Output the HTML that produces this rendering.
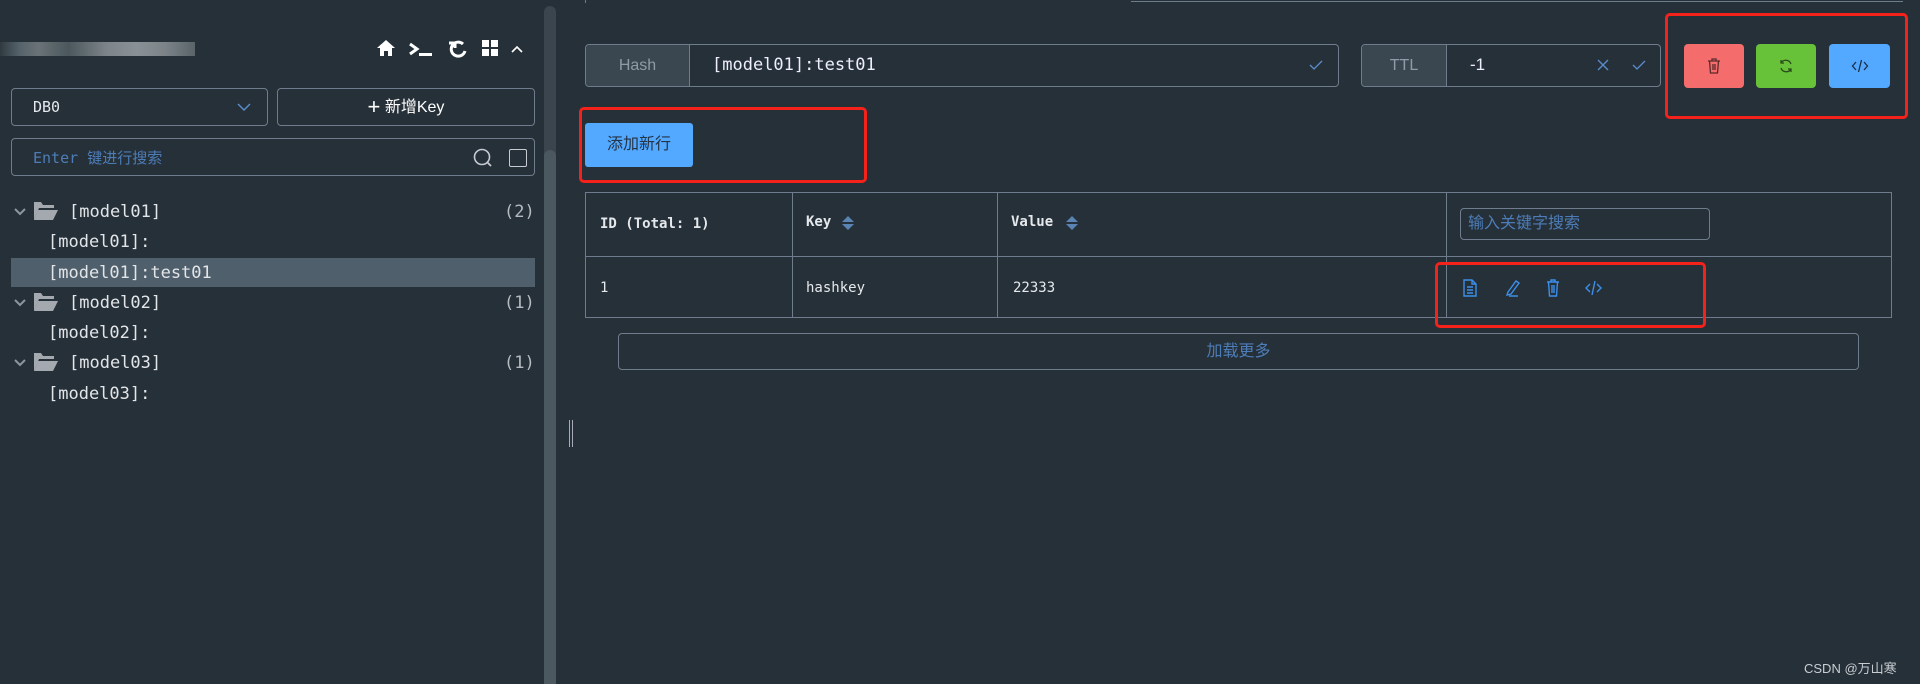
<!DOCTYPE html>
<html><head><meta charset="utf-8"><style>
*{box-sizing:border-box;margin:0;padding:0}
body{width:1920px;height:684px;background:#263038;position:relative;overflow:hidden;font-family:"Liberation Sans","Noto Sans CJK SC",sans-serif;color:#e6e9ec}
.a{position:absolute}
.mono{font-family:"DejaVu Sans Mono","Liberation Mono","Noto Sans CJK SC",monospace}
.bd{border:1px solid #6e7c8d;border-radius:4px}
.tree{font-size:17px;color:#e3e6e9;line-height:20px}
.red{border:3px solid #f5221b;border-radius:5px}
</style></head><body>
<div class="a" style="left:0;top:42px;width:195px;height:14px;background:linear-gradient(90deg,#2f3a40 0,#56626a 10%,#6a7377 20%,#4a575c 35%,#7e858a 55%,#8a9196 70%,#7b8388 85%,#5a6468 100%)"></div>
<svg class="a" style="left:375px;top:38px" width="152" height="20" viewBox="0 0 152 20">
<path d="M2 10 L11 2 L20 10 L17 10 L17 18 L13 18 L13 13 L9 13 L9 18 L5 18 L5 10 Z" fill="#fff"/>
<path d="M35 6 L42 11 L35 16" stroke="#fff" stroke-width="3" fill="none"/><rect x="44" y="15" width="13" height="3" fill="#fff"/>
<path d="M88 6 A7 7 0 1 0 90 13" stroke="#fff" stroke-width="3" fill="none"/><path d="M74 5 L80 5 L80 10" stroke="#fff" stroke-width="3" fill="none"/>
<rect x="107" y="2" width="7" height="7" fill="#fff"/><rect x="116" y="2" width="7" height="7" fill="#fff"/><rect x="107" y="11" width="7" height="7" fill="#fff"/><rect x="116" y="11" width="7" height="7" fill="#fff"/>
<path d="M137 14 L142 9 L147 14" stroke="#fff" stroke-width="1.6" fill="none"/>
</svg>
<div class="a bd" style="left:11px;top:88px;width:257px;height:38px"></div>
<div class="a mono" style="left:33px;top:98px;font-size:15px" >DB0</div>
<svg class="a" style="left:236px;top:101px" width="16" height="12"><path d="M2 3 L8 9 L14 3" stroke="#5b8ccc" stroke-width="1.5" fill="none"/></svg>
<div class="a bd" style="left:277px;top:88px;width:258px;height:38px;text-align:center;line-height:36px;font-size:16px;color:#fff"><span style="font-size:22px;font-weight:300;vertical-align:-2px">+</span> 新增Key</div>
<div class="a bd" style="left:11px;top:138px;width:524px;height:38px"></div>
<div class="a mono" style="left:33px;top:147px;font-size:15px;color:#4d7db8">Enter <span style="font-family:'Noto Sans CJK SC',sans-serif">键进行搜索</span></div>
<svg class="a" style="left:472px;top:147px" width="22" height="22"><circle cx="10" cy="10" r="7.5" stroke="#c5cbd1" stroke-width="1.6" fill="none"/><path d="M15 15 L19 19" stroke="#c5cbd1" stroke-width="1.8"/></svg>
<div class="a" style="left:509px;top:149px;width:18px;height:18px;border:1px solid #c5cbd1;border-radius:2px"></div>
<div class="a" style="left:11px;top:258px;width:524px;height:29px;background:#4f5f6b"></div>
<svg class="a" style="left:12px;top:200px" width="50" height="210">
<g id="f"><path d="M3 9 L8 14 L13 9" stroke="#8d969d" stroke-width="2" fill="none"/><path d="M22 2 L29 2 L31 5 L42 5 L42 8 L27 8 L22 20 Z" fill="#a3a9ae"/><path d="M26 10 L46 10 L41 20 L22 20 Z" fill="#a3a9ae"/></g>
<use href="#f" y="91"/><use href="#f" y="151"/>
</svg>
<div class="a tree mono" style="left:69px;top:202px">[model01]</div>
<div class="a tree mono" style="left:504px;top:202px;color:#b5bbc0">(2)</div>
<div class="a tree mono" style="left:48px;top:232px">[model01]:</div>
<div class="a tree mono" style="left:48px;top:263px">[model01]:test01</div>
<div class="a tree mono" style="left:69px;top:293px">[model02]</div>
<div class="a tree mono" style="left:504px;top:293px;color:#b5bbc0">(1)</div>
<div class="a tree mono" style="left:48px;top:323px">[model02]:</div>
<div class="a tree mono" style="left:69px;top:353px">[model03]</div>
<div class="a tree mono" style="left:504px;top:353px;color:#b5bbc0">(1)</div>
<div class="a tree mono" style="left:48px;top:384px">[model03]:</div>
<div class="a" style="left:544px;top:6px;width:12px;height:678px;background:#3a454d;border-radius:6px 6px 0 0"></div>
<div class="a" style="left:544px;top:150px;width:12px;height:534px;background:#4c5860;border-radius:6px 6px 0 0"></div>
<div class="a" style="left:569px;top:420px;width:1px;height:27px;background:#aab"></div>
<div class="a" style="left:572px;top:420px;width:1px;height:27px;background:#aab"></div>
<div class="a" style="left:585px;top:0;width:1px;height:3px;background:#6e7c8d"></div>
<div class="a" style="left:1131px;top:1px;width:772px;height:1px;background:#6e7c8d"></div>
<div class="a bd" style="left:585px;top:44px;width:754px;height:43px;overflow:hidden">
<div style="position:absolute;left:0;top:0;width:104px;height:41px;background:#3a4750;border-right:1px solid #6e7c8d;color:#8f9ba6;font-size:16px;text-align:center;line-height:41px">Hash</div></div>
<div class="a mono" style="left:712px;top:55px;font-size:17px;color:#eef">[model01]:test01</div>
<svg class="a" style="left:1308px;top:58px" width="16" height="14"><path d="M2 7 L6 11 L14 3" stroke="#5b8ccc" stroke-width="1.3" fill="none"/></svg>
<div class="a bd" style="left:1361px;top:44px;width:300px;height:43px;overflow:hidden">
<div style="position:absolute;left:0;top:0;width:85px;height:41px;background:#3a4750;border-right:1px solid #6e7c8d;color:#8f9ba6;font-size:16px;text-align:center;line-height:41px">TTL</div></div>
<div class="a" style="left:1470px;top:55px;font-size:17px;color:#eef">-1</div>
<svg class="a" style="left:1596px;top:58px" width="60" height="14"><path d="M2 2 L12 12 M12 2 L2 12" stroke="#5b8ccc" stroke-width="1.3"/><path d="M37 7 L41 11 L49 3" stroke="#5b8ccc" stroke-width="1.3" fill="none"/></svg>
<div class="a" style="left:1684px;top:44px;width:60px;height:44px;background:#f56c6c;border-radius:4px"></div>
<div class="a" style="left:1756px;top:44px;width:60px;height:44px;background:#67c23a;border-radius:4px"></div>
<div class="a" style="left:1829px;top:44px;width:61px;height:44px;background:#53a8ff;border-radius:4px"></div>
<svg class="a" style="left:1706px;top:57px" width="16" height="18"><path d="M2 4 H14 M6 4 V2 H10 V4 M3.5 4 L4.5 16 H11.5 L12.5 4 M7 7 V13 M9 7 V13" stroke="#5a2a2a" stroke-width="1.3" fill="none"/></svg>
<svg class="a" style="left:1778px;top:58px" width="16" height="16"><path d="M13 6 A5.5 5.5 0 0 0 3 5 M3 10 A5.5 5.5 0 0 0 13 11 M3 2 V5 H6 M13 14 V11 H10" stroke="#2a4a1a" stroke-width="1.3" fill="none"/></svg>
<svg class="a" style="left:1851px;top:58px" width="18" height="16"><path d="M5 4 L1.5 8 L5 12 M13 4 L16.5 8 L13 12 M10.5 2 L7.5 14" stroke="#1a2f4a" stroke-width="1.3" fill="none"/></svg>
<div class="a red" style="left:1665px;top:13px;width:243px;height:106px"></div>
<div class="a" style="left:585px;top:123px;width:108px;height:44px;background:#53a8ff;border-radius:3px;color:#233447;font-size:16px;text-align:center;line-height:44px">添加新行</div>
<div class="a red" style="left:579px;top:107px;width:288px;height:76px"></div>
<div class="a" style="left:585px;top:192px;width:1307px;height:126px;border:1px solid #6e7c8d"></div>
<div class="a" style="left:585px;top:256px;width:1307px;height:1px;background:#6e7c8d"></div>
<div class="a" style="left:792px;top:192px;width:1px;height:126px;background:#6e7c8d"></div>
<div class="a" style="left:997px;top:192px;width:1px;height:126px;background:#6e7c8d"></div>
<div class="a" style="left:1446px;top:192px;width:1px;height:126px;background:#6e7c8d"></div>
<div class="a mono" style="left:600px;top:216px;font-size:14px;font-weight:bold">ID (Total: 1)</div>
<div class="a mono" style="left:806px;top:214px;font-size:14px;font-weight:bold">Key</div>
<div class="a mono" style="left:1011px;top:214px;font-size:14px;font-weight:bold">Value</div>
<svg class="a" style="left:841px;top:215px" width="14" height="16"><path d="M7 1 L13 7 H1 Z M1 9 H13 L7 15 Z" fill="#5a84b4"/></svg>
<svg class="a" style="left:1065px;top:215px" width="14" height="16"><path d="M7 1 L13 7 H1 Z M1 9 H13 L7 15 Z" fill="#5a84b4"/></svg>
<div class="a bd" style="left:1460px;top:208px;width:250px;height:32px;color:#4d7db8;font-size:16px;padding-left:7px;line-height:30px">输入关键字搜索</div>
<div class="a mono" style="left:600px;top:280px;font-size:14px">1</div>
<div class="a mono" style="left:806px;top:280px;font-size:14px">hashkey</div>
<div class="a mono" style="left:1013px;top:280px;font-size:14px">22333</div>
<svg class="a" style="left:1462px;top:278px" width="150" height="20" viewBox="0 0 150 20">
<g stroke="#3c8fea" stroke-width="1.4" fill="none">
<path d="M2 2 H10 L14 6 V18 H2 Z M10 2 V6 H14 M5 9 H11 M5 12 H11 M5 15 H11"/>
<path d="M46 14 L54 3 L57 5 L49 16 L45 17 Z M47 18 H56"/>
<path d="M85 4 H97 M89 4 V2 H93 V4 M86.5 4 L87.5 18 H94.5 L95.5 4 M90 7 V15 M92 7 V15"/>
<path d="M128 6 L124 10 L128 14 M135 6 L139 10 L135 14 M133 3 L130 17"/>
</g></svg>
<div class="a red" style="left:1435px;top:262px;width:271px;height:66px"></div>
<div class="a bd" style="left:618px;top:333px;width:1241px;height:37px;text-align:center;line-height:35px;color:#4d7db8;font-size:16px">加载更多</div>
<div class="a" style="left:1804px;top:658px;font-size:13px;color:#c8cdd2">CSDN @万山寒</div>
</body></html>
